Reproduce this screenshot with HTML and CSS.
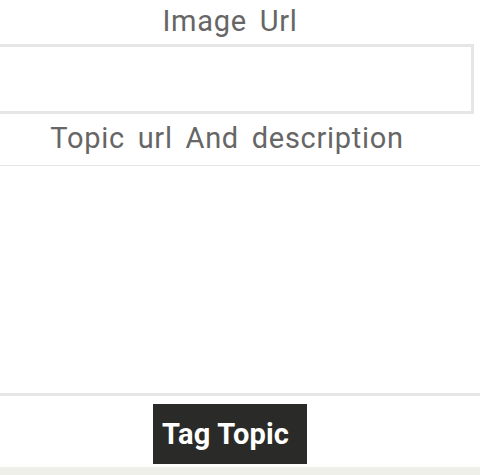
FILE: index.html
```html
<!DOCTYPE html>
<html lang="en">
<head>
  <meta charset="UTF-8">
  <meta name="viewport" content="width=device-width, initial-scale=1.0">
  <title>Tag Topic</title>
  <link rel="stylesheet" href="styles.css">
</head>
<body>
  <form class="topic-form">
    <label class="field-label" for="image-url">Image Url</label>
    <input type="text" id="image-url" class="url-input">
    <label class="field-label desc-label" for="topic-desc">Topic url And description</label>
    <textarea id="topic-desc" class="desc-input"></textarea>
    <div class="actions">
      <button type="button" class="tag-btn">Tag Topic</button>
    </div>
  </form>
  <div class="footer-strip"></div>
</body>
</html>
```

FILE: styles.css
```css
body {
  margin: 0;
  padding: 0;
  background: #fff;
  font-family: Roboto, "Noto Sans", sans-serif;
  overflow: hidden;
}

.topic-form {
  display: flex;
  flex-direction: column;
  align-items: center;
  margin-left: -14px;
  width: 488px;
}

.field-label {
  display: block;
  font-size: 29px;
  line-height: 40px;
  color: #666;
  letter-spacing: 0.7px;
  word-spacing: 5px;
  margin-top: 1px;
}

.url-input {
  box-sizing: border-box;
  width: 488px;
  height: 70px;
  margin: 3px 0 0;
  border: 3px solid #e6e6e6;
  background: #fff;
}

.desc-label {
  margin-top: 4px;
  margin-right: 6px;
}

.desc-input {
  box-sizing: border-box;
  align-self: flex-start;
  width: 494px;
  height: 231px;
  margin: 7px 0 0;
  border: none;
  border-top: 1px solid #e6e6e6;
  border-bottom: 3px solid #e6e6e6;
  resize: none;
}

.actions {
  padding-top: 8px;
}

.tag-btn {
  display: block;
  width: 154px;
  height: 60px;
  padding: 0 10px 0 9px;
  text-align: left;
  background: #2a2b29;
  color: #fff;
  border: none;
  border-radius: 0;
  font-family: Roboto, sans-serif;
  font-weight: bold;
  font-size: 29px;
  letter-spacing: 0.2px;
}

.footer-strip {
  margin-top: 3px;
  height: 10px;
  background: #efefe9;
}
```
